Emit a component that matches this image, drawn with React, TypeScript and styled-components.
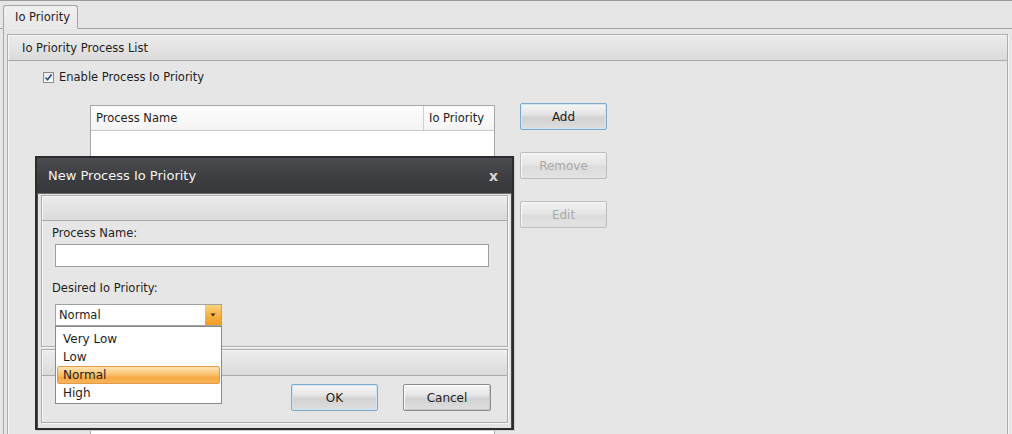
import React from 'react'
import styled, { createGlobalStyle, css } from 'styled-components'

const GlobalStyle = createGlobalStyle`
  html, body {
    margin: 0;
    padding: 0;
    background: #e6e6e6;
  }
  body {
    font-family: 'DejaVu Sans', 'Liberation Sans', sans-serif;
    font-size: 11.5px;
    color: #1e1e1e;
  }
`

const Page = styled.div`
  position: relative;
  width: 1012px;
  height: 434px;
  overflow: hidden;
  background: #e6e6e6;
  border-top: 1px solid #9c9c9c;
  box-sizing: border-box;
  display: flex;
  flex-direction: column;
`

const TabStrip = styled.div`
  display: flex;
  align-items: flex-end;
  height: 27px;
  padding-left: 3px;
  border-bottom: 1px solid #a4a4a4;
`

const Tab = styled.div`
  width: 75px;
  height: 24px;
  margin-bottom: -1px;
  border: 1px solid #a4a4a4;
  border-bottom: 1px solid #ececec;
  border-radius: 3px 3px 0 0;
  background: linear-gradient(#f0f0f0, #e8e8e8);
  display: flex;
  align-items: center;
  padding-left: 11px;
  box-sizing: border-box;
`

const TabPanel = styled.div`
  flex: 1;
  display: flex;
  margin-left: 3px;
  border-left: 1px solid #a8a8a8;
  padding: 5px 4px 0 3px;
`

const GroupBox = styled.div<{ $open?: boolean; $h?: number }>`
  flex: ${p => (p.$h ? 'none' : '1')};
  ${p => p.$h && `height: ${p.$h}px;`}
  display: flex;
  flex-direction: column;
  box-sizing: border-box;
  border: 1px solid #adadad;
  box-shadow: inset 1px 1px 0 #f7f7f7, 1px 1px 0 #f7f7f7;
  background: #e6e6e6;
  ${p =>
    p.$open &&
    css`
      border-bottom: none;
    `}
`

const GroupHeader = styled.div<{ $h: number }>`
  height: ${p => p.$h}px;
  box-sizing: border-box;
  flex: none;
  display: flex;
  align-items: center;
  padding-left: 14px;
  background: linear-gradient(#ececec, #e2e2e2 60%, #dadada);
  border-bottom: 1px solid #a9a9a9;
  box-shadow: inset 1px 1px 0 #f6f6f6;
`

const GroupBody = styled.div`
  flex: 1;
  display: flex;
  flex-direction: column;
  padding: 9px 0 0 35px;
`

const CheckRow = styled.label`
  display: flex;
  align-items: center;
  gap: 5px;
  height: 14px;
`

const CheckBox = styled.span`
  width: 11px;
  height: 11px;
  border: 1px solid #8a8a8a;
  background: linear-gradient(#e9e9e9, #ffffff);
  box-sizing: border-box;
  display: flex;
  align-items: center;
  justify-content: center;
`

const ListArea = styled.div`
  flex: 1;
  display: flex;
  gap: 25px;
  margin: 21px 0 0 47px;
`

const ListView = styled.div`
  width: 405px;
  background: #fff;
  border: 1px solid #a6a6a6;
  border-bottom: none;
  box-sizing: border-box;
`

const ListHeader = styled.div`
  display: flex;
  height: 24px;
  background: linear-gradient(#fdfdfd, #f4f4f4);
  border-bottom: 1px solid #c9c9c9;
`

const HeaderCell = styled.div<{ $w?: number }>`
  ${p => (p.$w ? `width: ${p.$w}px;` : 'flex: 1;')}
  display: flex;
  align-items: center;
  padding-left: 5px;
  box-sizing: border-box;
  & + & {
    border-left: 1px solid #d0d0d0;
  }
`

const ButtonColumn = styled.div`
  display: flex;
  flex-direction: column;
  gap: 22px;
  margin-top: -2px;
`

const Button = styled.button<{ $default?: boolean; $w?: number }>`
  width: ${p => p.$w ?? 87}px;
  height: 27px;
  padding: 0;
  font-family: inherit;
  font-size: 12px;
  color: #1e1e1e;
  border: 1px solid #8c8c8c;
  border-radius: 2px;
  background: linear-gradient(#f6f6f6, #e6e6e6 40%, #d2d2d2 55%, #dedede);
  box-shadow: inset 1px 1px 0 #fdfdfd, inset -1px -1px 0 #c8c8c8;
  ${p =>
    p.$default &&
    css`
      border-color: #7fa9c9;
      box-shadow: inset 0 0 0 1px #cfe6f6;
    `}
  &:disabled {
    color: #a9a9a9;
    border-color: #bdbdbd;
    background: linear-gradient(#f0f0f0, #e6e6e6 45%, #dcdcdc 55%, #e3e3e3);
    box-shadow: inset 1px 1px 0 #f8f8f8;
  }
`

const Dialog = styled.div`
  position: absolute;
  left: 35px;
  top: 155px;
  width: 479px;
  height: 274px;
  box-sizing: border-box;
  border: 2px solid #2b2c2e;
  background: #e4e4e4;
  display: flex;
  flex-direction: column;
  box-shadow: 1px 1px 0 #d0d0d0;
`

const TitleBar = styled.div`
  height: 35px;
  flex: none;
  display: flex;
  align-items: center;
  justify-content: space-between;
  padding: 0 14px 0 11px;
  background: linear-gradient(#4b4d51, #3d3f43 50%, #35373b);
  color: #f4f4f4;
  font-size: 13px;
`

const CloseMark = styled.span`
  color: #d6d6d6;
  font-size: 14px;
  font-weight: bold;
`

const DialogBody = styled.div`
  flex: 1;
  display: flex;
  flex-direction: column;
  gap: 2px;
  padding: 1px 3px 5px 3px;
  border-top: 1px solid #6a6c70;
  border-left: 1px solid #4a4a4a;
  border-right: 1px solid #4a4a4a;
`

const FieldBody = styled.div`
  display: flex;
  flex-direction: column;
  padding: 5px 20px 0 10px;
`

const FieldLabel = styled.div<{ $gap: number }>`
  height: 14px;
  margin-bottom: ${p => p.$gap}px;
`

const TextInput = styled.div`
  width: 434px;
  height: 23px;
  margin-left: 3px;
  margin-bottom: 14px;
  background: #fff;
  border: 1px solid #9e9e9e;
  box-sizing: border-box;
`

const Combo = styled.div`
  position: relative;
  width: 167px;
  height: 22px;
  margin-left: 3px;
  background: #fff;
  border: 1px solid #a2a2a2;
  box-sizing: border-box;
  display: flex;
  align-items: center;
`

const ComboText = styled.span`
  flex: 1;
  padding-left: 3px;
`

const ComboArrow = styled.span`
  width: 16px;
  align-self: stretch;
  background: linear-gradient(#fbd27e, #f7b347 50%, #f39d24);
  display: flex;
  align-items: center;
  justify-content: center;
`

const DropList = styled.ul`
  position: absolute;
  left: -1px;
  top: 21px;
  width: 167px;
  margin: 0;
  padding: 3px 1px 1px;
  list-style: none;
  background: #fff;
  border: 1px solid #8a8a8a;
  box-sizing: border-box;
  z-index: 2;
`

const DropItem = styled.li<{ $active?: boolean }>`
  height: 18px;
  box-sizing: border-box;
  display: flex;
  align-items: center;
  padding-left: 5px;
  font-size: 12px;
  border: 1px solid transparent;
  border-radius: 2px;
  ${p =>
    p.$active &&
    css`
      border-color: #e39a44;
      background: linear-gradient(#fde4b4, #fbc777 40%, #f7a843 70%, #f6b55e);
    `}
`

const ActionRow = styled.div`
  flex: 1;
  display: flex;
  justify-content: flex-end;
  gap: 25px;
  padding: 8px 16px 0 0;
`

const CheckGlyph = () => (
  <svg width="9" height="9" viewBox="0 0 9 9">
    <path d="M1.5 4.5 L3.6 6.8 L7.6 1.6" fill="none" stroke="#2a4f8c" strokeWidth="1.7" />
  </svg>
)

const ArrowGlyph = () => (
  <svg width="6" height="4" viewBox="0 0 6 4">
    <path d="M0.5 0.5 H5.5 L3 3.5 Z" fill="#3a2a10" />
  </svg>
)

const priorities = ['Very Low', 'Low', 'Normal', 'High']

const App: React.FC = () => (
  <>
    <GlobalStyle />
    <Page>
      <TabStrip>
        <Tab>Io Priority</Tab>
      </TabStrip>
      <TabPanel>
        <GroupBox $open>
          <GroupHeader $h={26}>Io Priority Process List</GroupHeader>
          <GroupBody>
            <CheckRow>
              <CheckBox>
                <CheckGlyph />
              </CheckBox>
              Enable Process Io Priority
            </CheckRow>
            <ListArea>
              <ListView>
                <ListHeader>
                  <HeaderCell>Process Name</HeaderCell>
                  <HeaderCell $w={71}>Io Priority</HeaderCell>
                </ListHeader>
              </ListView>
              <ButtonColumn>
                <Button $default>Add</Button>
                <Button disabled>Remove</Button>
                <Button disabled>Edit</Button>
              </ButtonColumn>
            </ListArea>
          </GroupBody>
        </GroupBox>
      </TabPanel>

      <Dialog>
        <TitleBar>
          New Process Io Priority
          <CloseMark>x</CloseMark>
        </TitleBar>
        <DialogBody>
          <GroupBox $h={152}>
            <GroupHeader $h={25} />
            <FieldBody>
              <FieldLabel $gap={4}>Process Name:</FieldLabel>
              <TextInput />
              <FieldLabel $gap={9}>Desired Io Priority:</FieldLabel>
              <Combo>
                <ComboText>Normal</ComboText>
                <ComboArrow>
                  <ArrowGlyph />
                </ComboArrow>
                <DropList>
                  {priorities.map(p => (
                    <DropItem key={p} $active={p === 'Normal'}>
                      {p}
                    </DropItem>
                  ))}
                </DropList>
              </Combo>
            </FieldBody>
          </GroupBox>
          <GroupBox>
            <GroupHeader $h={26} />
            <ActionRow>
              <Button $default>OK</Button>
              <Button $w={88}>Cancel</Button>
            </ActionRow>
          </GroupBox>
        </DialogBody>
      </Dialog>
    </Page>
  </>
)

export default App
